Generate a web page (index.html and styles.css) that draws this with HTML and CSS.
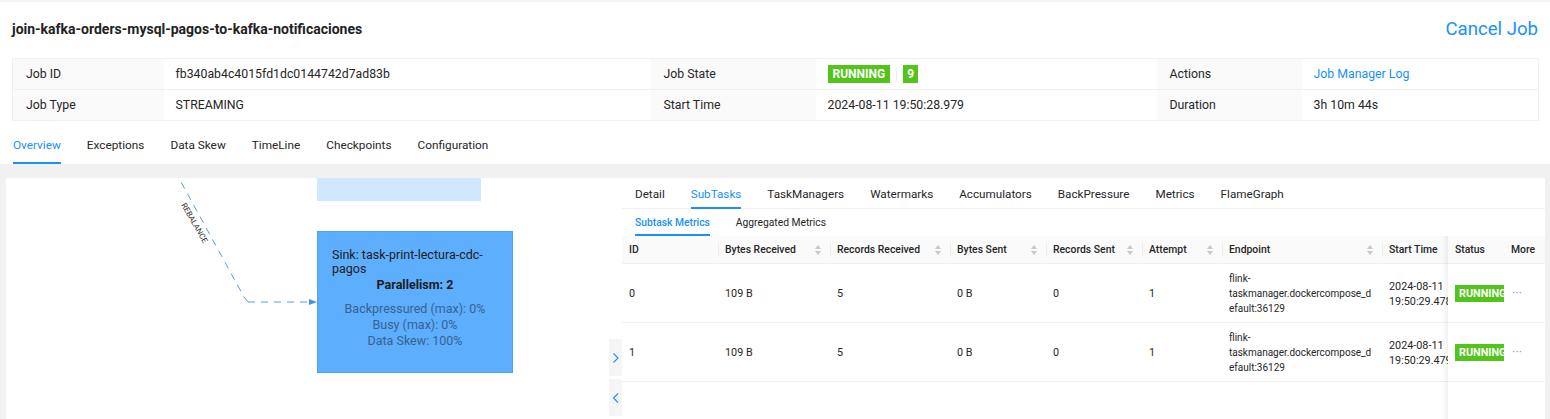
FILE: index.html
```html
<!DOCTYPE html>
<html>
<head>
<meta charset="utf-8">
<link rel="stylesheet" href="styles.css">
</head>
<body>
<div class="page">
  <header class="job-header">
    <h1 class="job-title">join-kafka-orders-mysql-pagos-to-kafka-notificaciones</h1>
    <a class="cancel-job">Cancel Job</a>
  </header>

  <table class="desc">
    <colgroup>
      <col style="width:151px"><col style="width:487px"><col style="width:165px"><col style="width:341px"><col style="width:145px"><col style="width:237px">
    </colgroup>
    <tr>
      <th>Job ID</th><td>fb340ab4c4015fd1dc0144742d7ad83b</td>
      <th>Job State</th>
      <td><span class="tag tag-lg">RUNNING</span><span class="tag-divider"></span><span class="tag tag-lg tag-num">9</span></td>
      <th>Actions</th><td><a class="link">Job Manager Log</a></td>
    </tr>
    <tr>
      <th>Job Type</th><td>STREAMING</td>
      <th>Start Time</th><td>2024-08-11 19:50:28.979</td>
      <th>Duration</th><td>3h 10m 44s</td>
    </tr>
  </table>

  <nav class="tabs">
    <span class="tab active">Overview</span>
    <span class="tab">Exceptions</span>
    <span class="tab">Data Skew</span>
    <span class="tab">TimeLine</span>
    <span class="tab">Checkpoints</span>
    <span class="tab">Configuration</span>
  </nav>

  <main class="content">
    <div class="panel">
      <section class="graph">
        <svg class="edges" width="616" height="242" viewBox="0 0 616 242">
          <g transform="translate(-6,-177)">
            <path d="M175 170 L244 296 L248 301" fill="none" stroke="#4f9ff2" stroke-width="1" stroke-dasharray="7 6"/>
            <path d="M248 301 L311 301" fill="none" stroke="#4f9ff2" stroke-width="1" stroke-dasharray="7 6"/>
            <path d="M309 298 L317 301 L309 304 Z" fill="#3f95ee"/>
            <text x="0" y="0" transform="translate(181,204) rotate(60)" class="edge-label">REBALANCE</text>
          </g>
        </svg>
        <div class="node node-prev"></div>
        <div class="node node-sink">
          <div class="node-name">Sink: task-print-lectura-cdc-pagos</div>
          <div class="node-par">Parallelism: 2</div>
          <div class="node-metrics">
            <div>Backpressured (max): 0%</div>
            <div>Busy (max): 0%</div>
            <div>Data Skew: 100%</div>
          </div>
        </div>
        <div class="toggles">
          <span class="toggle">
            <svg width="8" height="12" viewBox="0 0 8 12"><path d="M1.5 1.5 L6 6 L1.5 10.5" fill="none" stroke="#1890ff" stroke-width="1.1"/></svg>
          </span>
          <span class="toggle">
            <svg width="8" height="12" viewBox="0 0 8 12"><path d="M6 1.5 L1.5 6 L6 10.5" fill="none" stroke="#1890ff" stroke-width="1.1"/></svg>
          </span>
        </div>
      </section>

      <section class="drawer">
        <div class="dtabs">
          <span class="dtab">Detail</span>
          <span class="dtab active">SubTasks</span>
          <span class="dtab">TaskManagers</span>
          <span class="dtab">Watermarks</span>
          <span class="dtab">Accumulators</span>
          <span class="dtab">BackPressure</span>
          <span class="dtab">Metrics</span>
          <span class="dtab">FlameGraph</span>
        </div>
        <div class="stabs">
          <span class="stab active">Subtask Metrics</span>
          <span class="stab">Aggregated Metrics</span>
        </div>
        <div class="table-wrap">
          <table class="grid">
            <colgroup>
              <col style="width:96px"><col style="width:112px"><col style="width:120px"><col style="width:96px"><col style="width:96px"><col style="width:80px"><col style="width:160px"><col style="width:66px"><col style="width:56px"><col style="width:41px">
            </colgroup>
            <thead>
              <tr>
                <th>ID</th>
                <th class="sep sortable"><span>Bytes Received</span><i class="sorter"></i></th>
                <th class="sep sortable"><span>Records Received</span><i class="sorter"></i></th>
                <th class="sep sortable"><span>Bytes Sent</span><i class="sorter"></i></th>
                <th class="sep sortable"><span>Records Sent</span><i class="sorter"></i></th>
                <th class="sep sortable"><span>Attempt</span><i class="sorter"></i></th>
                <th class="sep sortable"><span>Endpoint</span><i class="sorter"></i></th>
                <th class="sep">Start Time</th>
                <th class="fixed">Status</th>
                <th>More</th>
              </tr>
            </thead>
            <tbody>
              <tr>
                <td>0</td><td>109 B</td><td>5</td><td>0 B</td><td>0</td><td>1</td>
                <td class="endpoint"><div>flink-</div><div>taskmanager.dockercompose_d</div><div>efault:36129</div></td>
                <td class="clip"><div class="nowrap">2024-08-11</div><div class="nowrap">19:50:29.478</div></td>
                <td class="fixed clip"><span class="tag tag-sm">RUNNING</span></td>
                <td class="more"><span class="dots">···</span></td>
              </tr>
              <tr>
                <td>1</td><td>109 B</td><td>5</td><td>0 B</td><td>0</td><td>1</td>
                <td class="endpoint"><div>flink-</div><div>taskmanager.dockercompose_d</div><div>efault:36129</div></td>
                <td class="clip"><div class="nowrap">2024-08-11</div><div class="nowrap">19:50:29.479</div></td>
                <td class="fixed clip"><span class="tag tag-sm">RUNNING</span></td>
                <td class="more"><span class="dots">···</span></td>
              </tr>
            </tbody>
          </table>
          <div class="fixed-shadow"></div>
        </div>
      </section>
    </div>
  </main>
</div>
</body>
</html>
```

FILE: styles.css
```css
* { box-sizing: border-box; }
html, body { margin: 0; padding: 0; }
body {
  font-family: Roboto, "Noto Sans", "Liberation Sans", sans-serif;
  color: #262626;
  background: #fff;
  width: 1550px;
  height: 419px;
  overflow: hidden;
}
.page {
  border-top: 2px solid #f4f4f4;
  display: flex;
  flex-direction: column;
  height: 419px;
}
.job-header {
  display: flex;
  justify-content: space-between;
  align-items: center;
  height: 53px;
  padding: 0 12px 0 12px;
}
.job-title {
  margin: 0;
  font-size: 14px;
  font-weight: 700;
  color: #222;
}
.cancel-job {
  font-size: 18.6px;
  color: #1890ff;
}

.desc {
  margin: 3px 12px 0 12px;
  width: 1526px;
  border-collapse: collapse;
  table-layout: fixed;
  font-size: 12.3px;
  border: 1px solid #f0f0f0;
}
.desc th, .desc td {
  height: 31px;
  padding: 0 12px;
  text-align: left;
  font-weight: 400;
  border: 1px solid #f0f0f0;
  border-left: none;
  border-right: none;
  color: #262626;
}
.desc th { background: #fafafa; padding-left: 13px; }
.link { color: #1890ff; }
.tag {
  display: inline-block;
  background: #52c41a;
  color: #fff;
  font-weight: 700;
  vertical-align: middle;
  white-space: nowrap;
}
.tag-lg {
  height: 18px;
  line-height: 18px;
  font-size: 12px;
  padding: 0 5px;
}
.tag-num { padding: 0 4px; }
.tag-divider {
  display: inline-block;
  width: 1px;
  height: 12px;
  background: #eee;
  margin: 0 6px;
  vertical-align: middle;
}

.tabs {
  display: flex;
  gap: 26px;
  padding: 0 0 0 13px;
  height: 43px;
  align-items: stretch;
  font-size: 11.8px;
}
.tab {
  display: flex;
  align-items: center;
  padding-top: 6px;
  border-bottom: 2px solid transparent;
  color: #262626;
}
.tab.active { color: #1890ff; border-bottom-color: #1890ff; }

.content {
  flex: 1;
  background: #f1f1f1;
  padding: 14px 5px 0 6px;
  min-height: 0;
}
.panel {
  display: flex;
  height: 100%;
  background: #fff;
}
.graph {
  position: relative;
  width: 616px;
  flex: none;
  overflow: hidden;
}
.edges { position: absolute; left: 0; top: 0; }
.edge-label { font-size: 8px; fill: #333; font-family: Roboto, "Liberation Sans", sans-serif; }
.node { position: absolute; }
.node-prev {
  left: 311px; top: 0; width: 164px; height: 23px;
  background: #d1e7fd;
}
.node-sink {
  left: 311px; top: 53px; width: 196px; height: 142px;
  background: #5eaefe;
  border: 1px solid #4ea2f5;
  padding: 16px 14px 0 14px;
  font-size: 12.5px;
  color: #1c1c1c;
}
.node-name { line-height: 14px; }
.node-par { text-align: center; font-weight: 700; line-height: 16px; margin-top: 1px; }
.node-metrics {
  margin-top: 8px;
  text-align: center;
  line-height: 16px;
  color: #36628f;
}
.toggles {
  position: absolute;
  right: 0;
  top: 161px;
  display: flex;
  flex-direction: column;
  gap: 3px;
}
.toggle {
  width: 13px;
  height: 37px;
  background: #f5f5f5;
  display: flex;
  align-items: center;
  justify-content: center;
}

.drawer {
  flex: 1;
  display: flex;
  flex-direction: column;
  min-width: 0;
}
.dtabs {
  display: flex;
  gap: 26px;
  height: 31px;
  padding-left: 13px;
  border-bottom: 1px solid #f0f0f0;
  font-size: 11.7px;
}
.dtab {
  display: flex;
  align-items: center;
  padding-top: 2px;
  border-bottom: 2px solid transparent;
  margin-bottom: -1px;
}
.dtab.active { color: #1890ff; border-bottom-color: #1890ff; }
.stabs {
  display: flex;
  gap: 26px;
  height: 27px;
  padding-left: 13px;
  font-size: 10.3px;
}
.stab {
  display: flex;
  align-items: center;
  padding-top: 1px;
  border-bottom: 2px solid transparent;
  font-weight: 400;
}
.stab.active { color: #1890ff; border-bottom-color: #1890ff; font-weight: 500; }

.table-wrap { position: relative; flex: 1; }
.grid {
  border-collapse: separate;
  border-spacing: 0;
  table-layout: fixed;
  width: 923px;
  font-size: 10.8px;
}
.grid th {
  position: relative;
  height: 28px;
  padding: 0 7px;
  background: #fafafa;
  text-align: left;
  font-weight: 500;
  font-size: 10.4px;
  border-bottom: 1px solid #f0f0f0;
  white-space: nowrap;
  color: #262626;
}
.grid th.sep::before {
  content: "";
  position: absolute;
  left: 0;
  top: 7px;
  width: 1px;
  height: 14px;
  background: #ececec;
}
.grid th.sortable span { display: inline-block; vertical-align: middle; }
.sorter {
  position: absolute;
  right: 9px;
  top: 9px;
  width: 6px;
  height: 10px;
}
.sorter::before, .sorter::after {
  content: "";
  position: absolute;
  left: 0;
  border-left: 3px solid transparent;
  border-right: 3px solid transparent;
}
.sorter::before { top: 0; border-bottom: 4px solid #c8c8c8; }
.sorter::after { bottom: 0; border-top: 4px solid #c8c8c8; }
.grid td {
  padding: 7px 7px 6px 7px;
  line-height: 15px;
  border-bottom: 1px solid #f0f0f0;
  vertical-align: middle;
  color: #262626;
}
.grid td.endpoint { font-size: 10px; white-space: nowrap; }
.grid .clip { overflow: hidden; }
.nowrap { white-space: nowrap; }
.grid .fixed { background: #fff; }
.grid th.fixed { background: #fafafa; }
.tag-sm {
  height: 17px;
  line-height: 17px;
  font-size: 10.8px;
  padding: 0 4px;
  margin-right: -20px;
}
.dots { margin-left: 1px; color: #5aa9f7; font-size: 12px; letter-spacing: 0.3px; }
.fixed-shadow {
  position: absolute;
  left: 820px;
  top: 0;
  bottom: 0;
  width: 6px;
  background: linear-gradient(to right, rgba(255,255,255,0), rgba(0,0,0,0.06));
  pointer-events: none;
}
```
